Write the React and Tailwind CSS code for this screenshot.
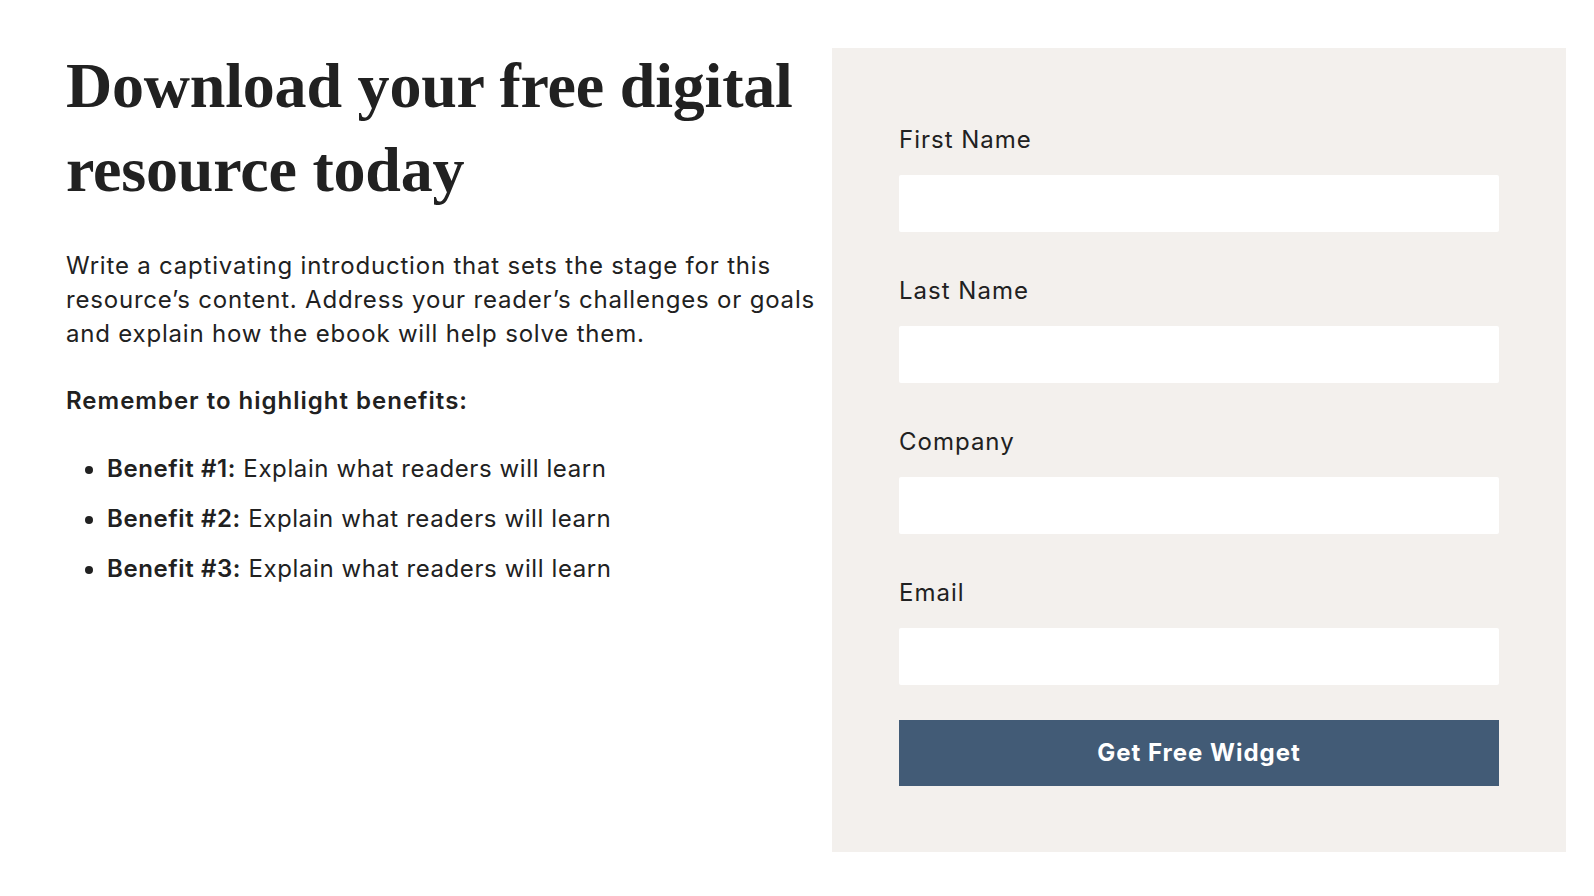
export default function App() {
  const sans = "font-['Inter','Liberation_Sans',sans-serif]";
  const fields = ["First Name", "Last Name", "Company", "Email"];
  return (
    <div className="w-[1594px] h-[896px] bg-white text-[#212121] overflow-hidden">
      <div className="flex pt-[48px] pl-[66px]">
        <div className="w-[750px]">
          <h1 className="font-['Liberation_Serif',serif] font-bold text-[64px] leading-[84px] -mt-[4px] tracking-[-0.2px]">
            Download your free digital resource today
          </h1>
          <p className={`${sans} text-[24px] leading-[34px] tracking-[0.8px] mt-[37px]`}>
            Write a captivating introduction that sets the stage for this resource’s content. Address your reader’s challenges or goals and explain how the ebook will help solve them.
          </p>
          <p className={`${sans} text-[24px] leading-[34px] tracking-[1px] mt-[33px] font-semibold`}>
            Remember to highlight benefits:
          </p>
          <ul className={`${sans} text-[24px] leading-[34px] tracking-[0.6px] mt-[34px] list-disc pl-[41px] flex flex-col gap-[16px]`}>
            <li><span className="font-semibold">Benefit #1:</span> Explain what readers will learn</li>
            <li><span className="font-semibold">Benefit #2:</span> Explain what readers will learn</li>
            <li><span className="font-semibold">Benefit #3:</span> Explain what readers will learn</li>
          </ul>
        </div>
        <div className="ml-[16px] w-[734px] h-[804px] bg-[#f3f0ed] pt-[74px] px-[67px] flex flex-col">
          {fields.map((f, i) => (
            <div key={f} className={i === fields.length - 1 ? "mb-[35px]" : "mb-[41px]"}>
              <label className={`${sans} block text-[24px] leading-[35px] tracking-[1px]`}>{f}</label>
              <div className="mt-[18px] h-[57px] bg-white rounded-[2px]" />
            </div>
          ))}
          <button className={`${sans} w-full h-[66px] bg-[#425b76] text-white text-[24px] tracking-[1px] font-bold`}>
            Get Free Widget
          </button>
        </div>
      </div>
    </div>
  );
}
